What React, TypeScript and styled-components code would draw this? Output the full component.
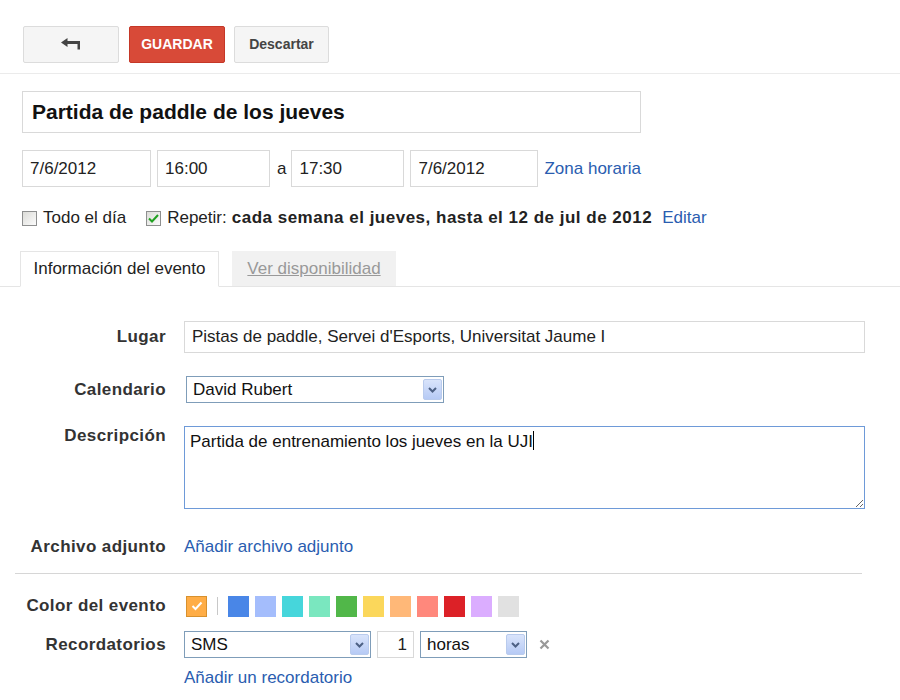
import React from 'react';
import styled, { createGlobalStyle } from 'styled-components';

const GlobalStyle = createGlobalStyle`
  body {
    margin: 0;
    background: #fff;
    font-family: "Liberation Sans", Arial, sans-serif;
    color: #222;
  }
`;

const Page = styled.div`
  width: 900px;
  height: 700px;
  overflow: hidden;
`;

const Toolbar = styled.div`
  display: flex;
  align-items: center;
  gap: 10px;
  height: 74px;
  box-sizing: border-box;
  padding: 26px 0 11px 23px;
  border-bottom: 1px solid #ebebeb;
`;

const Button = styled.button<{ $primary?: boolean; $width: number }>`
  width: ${(p) => p.$width}px;
  height: 37px;
  display: flex;
  align-items: center;
  justify-content: center;
  border-radius: 2px;
  border: 1px solid ${(p) => (p.$primary ? '#c53727' : '#dcdcdc')};
  background: ${(p) => (p.$primary ? '#d84a38' : '#f5f5f5')};
  color: ${(p) => (p.$primary ? '#fff' : '#444')};
  font-family: "Liberation Sans", Arial, sans-serif;
  font-weight: bold;
  font-size: 14px;
  padding: 0;
`;

const Main = styled.div`
  padding: 17px 0 0 22px;
`;

const TitleInput = styled.div`
  width: 619px;
  height: 42px;
  box-sizing: border-box;
  border: 1px solid #d9d9d9;
  padding: 0 9px;
  display: flex;
  align-items: center;
  font-size: 21px;
  font-weight: bold;
  color: #111;
`;

const DateRow = styled.div`
  display: flex;
  align-items: center;
  margin-top: 17px;
  gap: 6px;
  font-size: 17px;
`;

const TextBox = styled.div<{ $width: number; $height?: number; $align?: string }>`
  width: ${(p) => p.$width}px;
  height: ${(p) => p.$height ?? 37}px;
  box-sizing: border-box;
  border: 1px solid #d9d9d9;
  padding: 0 6px 0 7px;
  display: flex;
  align-items: center;
  justify-content: ${(p) => p.$align ?? 'flex-start'};
  font-size: 17px;
  color: #222;
  white-space: nowrap;
`;

const Sep = styled.span`
  margin: 0 -1px 0 1px;
  color: #222;
`;

const Link = styled.a<{ $left?: number }>`
  color: #2a5db0;
  text-decoration: none;
  font-size: 17px;
  white-space: nowrap;
  margin-left: ${(p) => p.$left ?? 0}px;
`;

const CheckRow = styled.div`
  display: flex;
  align-items: center;
  height: 22px;
  margin-top: 20px;
  font-size: 17px;
`;

const CheckLabel = styled.label<{ $gap?: number }>`
  display: flex;
  align-items: center;
  gap: 6px;
  margin-right: ${(p) => p.$gap ?? 0}px;
  white-space: nowrap;
`;

const Box = styled.span`
  width: 13px;
  height: 13px;
  border: 1px solid #8e8f8f;
  background: linear-gradient(135deg, #dcdcd8, #fbfbfb);
  display: flex;
  align-items: center;
  justify-content: center;
`;

const Strong = styled.b`
  margin-left: 5px;
  letter-spacing: 0.5px;
  white-space: nowrap;
`;

const Tabs = styled.div`
  display: flex;
  align-items: flex-end;
  gap: 13px;
  margin: 21px 0 0 -22px;
  padding-left: 20px;
  height: 36px;
  border-bottom: 1px solid #e5e5e5;
`;

const Tab = styled.div<{ $active?: boolean; $width: number }>`
  width: ${(p) => p.$width}px;
  height: ${(p) => (p.$active ? 36 : 35)}px;
  box-sizing: border-box;
  display: flex;
  align-items: center;
  justify-content: center;
  font-size: 17px;
  margin-bottom: ${(p) => (p.$active ? -1 : 0)}px;
  background: ${(p) => (p.$active ? '#fff' : '#f1f1f1')};
  border: 1px solid ${(p) => (p.$active ? '#e5e5e5' : '#f1f1f1')};
  border-bottom: ${(p) => (p.$active ? '1px solid #fff' : '0')};
  color: ${(p) => (p.$active ? '#222' : '#999')};
  text-decoration: ${(p) => (p.$active ? 'none' : 'underline')};
`;

const Form = styled.div``;

const Row = styled.div<{ $top: number; $height: number; $alignTop?: boolean }>`
  display: flex;
  align-items: ${(p) => (p.$alignTop ? 'flex-start' : 'center')};
  gap: 18px;
  margin-top: ${(p) => p.$top}px;
  min-height: ${(p) => p.$height}px;
  margin-left: -22px;
`;

const Label = styled.div<{ $pad?: number }>`
  width: 166px;
  text-align: right;
  font-weight: bold;
  font-size: 17px;
  letter-spacing: 0.4px;
  color: #333;
  padding-top: ${(p) => p.$pad ?? 0}px;
  white-space: nowrap;
`;

const TextArea = styled.textarea`
  width: 681px;
  height: 83px;
  box-sizing: border-box;
  border: 1px solid #6e9ad8;
  padding: 4px 5px;
  font-family: "Liberation Sans", Arial, sans-serif;
  font-size: 17px;
  color: #111;
  outline: none;
  resize: both;
`;

const Caret = styled.span`
  display: inline-block;
  width: 1px;
  height: 19px;
  background: #000;
  vertical-align: -3px;
`;

const Fake = styled.div`
  position: absolute;
  left: 6px;
  top: 5px;
  font-size: 17px;
  color: #111;
  pointer-events: none;
`;

const AreaWrap = styled.div`
  position: relative;
  display: flex;
`;

const SelectBox = styled.div<{ $width: number; $offset?: number }>`
  width: ${(p) => p.$width}px;
  height: 27px;
  box-sizing: border-box;
  border: 1px solid #7f9db9;
  display: flex;
  align-items: center;
  justify-content: space-between;
  padding: 0 1px 0 6px;
  margin-left: ${(p) => p.$offset ?? 0}px;
  font-size: 17px;
  color: #111;
  background: #fff;
`;

const SelectArrow = styled.span`
  width: 19px;
  height: 21px;
  box-sizing: border-box;
  border: 1px solid #b9cbed;
  border-radius: 2px;
  background: linear-gradient(#d9e4fb, #b6caf5);
  display: flex;
  align-items: center;
  justify-content: center;
`;

const Divider = styled.div`
  margin: 15px 0 0 -7px;
  width: 847px;
  height: 1px;
  background: #d6d6d6;
`;

const Swatches = styled.div`
  display: flex;
  align-items: center;
  gap: 6px;
  margin-left: 2px;
`;

const Swatch = styled.span<{ $color: string; $checked?: boolean }>`
  width: 21px;
  height: 21px;
  box-sizing: border-box;
  background: ${(p) => p.$color};
  border: ${(p) => (p.$checked ? '1px solid #d8912d' : '0')};
  display: flex;
  align-items: center;
  justify-content: center;
`;

const SwatchSep = styled.span`
  width: 1px;
  height: 18px;
  background: #c8c8c8;
  margin: 0 4px 0 4px;
`;

const ReminderRow = styled.div`
  display: flex;
  align-items: center;
  gap: 6px;
`;

const Remove = styled.span`
  margin-left: 6px;
  display: flex;
  align-items: center;
`;

const LinkRow = styled.div`
  margin: 9px 0 0 162px;
  height: 22px;
  display: flex;
  align-items: center;
`;

const Arrow = () => (
  <svg width="20" height="12" viewBox="0 0 20 12">
    <path d="M0 4.5 L6.5 0 L6.5 3 L19 3 L19 11.5 L16.5 11.5 L16.5 6 L6.5 6 L6.5 9 Z" fill="#444" />
  </svg>
);

const Chevron = () => (
  <svg width="9" height="6" viewBox="0 0 9 6">
    <path d="M1 1 L4.5 4.5 L8 1" stroke="#4d6185" strokeWidth="2" fill="none" />
  </svg>
);

const Select = ({ width, value, offset }: { width: number; value: string; offset?: number }) => (
  <SelectBox $width={width} $offset={offset}>
    <span>{value}</span>
    <SelectArrow>
      <Chevron />
    </SelectArrow>
  </SelectBox>
);

const colors = [
  '#4986e7',
  '#a4bdfc',
  '#46d6db',
  '#7ae7bf',
  '#51b749',
  '#fbd75b',
  '#ffb878',
  '#ff887c',
  '#dc2127',
  '#dbadff',
  '#e1e1e1',
];

export default function App() {
  return (
    <Page>
      <GlobalStyle />
      <Toolbar>
        <Button $width={96}>
          <Arrow />
        </Button>
        <Button $primary $width={96}>
          GUARDAR
        </Button>
        <Button $width={95} style={{ marginLeft: -1 }}>
          Descartar
        </Button>
      </Toolbar>
      <Main>
        <TitleInput>Partida de paddle de los jueves</TitleInput>
        <DateRow>
          <TextBox $width={129}>7/6/2012</TextBox>
          <TextBox $width={113}>16:00</TextBox>
          <Sep>a</Sep>
          <TextBox $width={113}>17:30</TextBox>
          <TextBox $width={128}>7/6/2012</TextBox>
          <Link href="#">Zona horaria</Link>
        </DateRow>
        <CheckRow>
          <CheckLabel $gap={20}>
            <Box />
            Todo el día
          </CheckLabel>
          <CheckLabel>
            <Box>
              <svg width="11" height="9" viewBox="0 0 11 9">
                <path d="M1 4.5 L4 7.5 L10 1" stroke="#21a121" strokeWidth="2" fill="none" />
              </svg>
            </Box>
            Repetir:
          </CheckLabel>
          <Strong>cada semana el jueves, hasta el 12 de jul de 2012</Strong>
          <Link href="#" $left={10}>
            Editar
          </Link>
        </CheckRow>
        <Tabs>
          <Tab $active $width={199}>
            Información del evento
          </Tab>
          <Tab $width={164}>Ver disponibilidad</Tab>
        </Tabs>
        <Form>
          <Row $top={34} $height={32}>
            <Label>Lugar</Label>
            <TextBox $width={681} $height={32}>
              Pistas de paddle, Servei d'Esports, Universitat Jaume I
            </TextBox>
          </Row>
          <Row $top={23} $height={27}>
            <Label>Calendario</Label>
            <Select width={258} value="David Rubert" offset={2} />
          </Row>
          <Row $top={23} $height={83} $alignTop>
            <Label $pad={0}>Descripción</Label>
            <AreaWrap>
              <TextArea defaultValue="" />
              <Fake>
                Partida de entrenamiento los jueves en la UJI
                <Caret />
              </Fake>
            </AreaWrap>
          </Row>
          <Row $top={27} $height={22}>
            <Label>Archivo adjunto</Label>
            <Link href="#">Añadir archivo adjunto</Link>
          </Row>
          <Divider />
          <Row $top={21} $height={22}>
            <Label>Color del evento</Label>
            <Swatches>
              <Swatch $color="#ffad46" $checked>
                <svg width="12" height="10" viewBox="0 0 12 10">
                  <path d="M1.5 5 L4.5 8 L10.5 1.5" stroke="#fff" strokeWidth="2" fill="none" />
                </svg>
              </Swatch>
              <SwatchSep />
              {colors.map((c) => (
                <Swatch key={c} $color={c} />
              ))}
            </Swatches>
          </Row>
          <Row $top={14} $height={27}>
            <Label>Recordatorios</Label>
            <ReminderRow>
              <Select width={187} value="SMS" />
              <TextBox $width={37} $height={27} $align="flex-end">
                1
              </TextBox>
              <Select width={107} value="horas" />
              <Remove>
                <svg width="11" height="11" viewBox="0 0 11 11">
                  <path d="M1.5 1.5 L9.5 9.5 M9.5 1.5 L1.5 9.5" stroke="#999" strokeWidth="2.2" />
                </svg>
              </Remove>
            </ReminderRow>
          </Row>
          <LinkRow>
            <Link href="#">Añadir un recordatorio</Link>
          </LinkRow>
        </Form>
      </Main>
    </Page>
  );
}
